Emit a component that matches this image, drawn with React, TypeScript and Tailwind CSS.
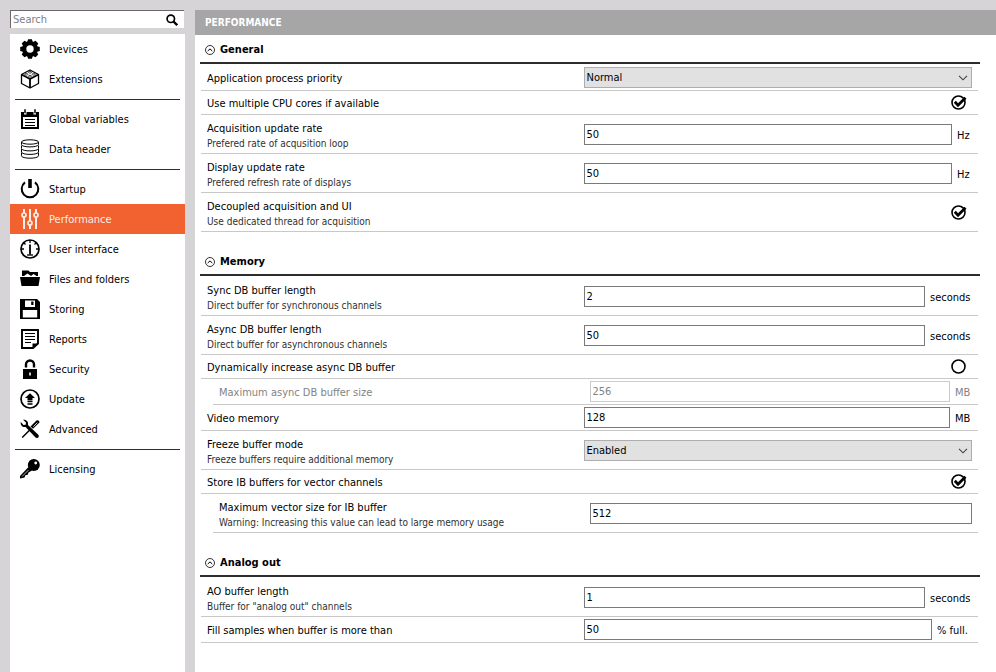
import { useId, useState } from "react";
import type { ReactNode } from "react";

const sidebarIcons: Record<string, ReactNode> = {
  Devices: (
    <>
      <g fill="currentColor">
        {[0, 45, 90, 135].map((angle) => (
          <path key={angle} d="M7.2 3 8.1 .2h3.800l.9 2.800v14l-.9 2.800H8.100l-.9-2.800z" transform={`rotate(${angle} 10 10)`} />
        ))}
        <circle cx="10" cy="10" r="7.800" />
      </g>
      <circle cx="10" cy="10" r="3.700" fill="#fff" />
    </>
  ),
  Extensions: (
    <g fill="none" stroke="currentColor" strokeWidth="1.400" strokeLinejoin="round">
      <path d="M1.500 5.500 10 1l8.500 4.500v9L10 19l-8.500-4.500z" strokeWidth="1.300" />
      <path d="M1.500 5.500 10 10l8.500-4.500M10 10v9" strokeWidth="1.800" />
      <g strokeWidth=".7">
        <ellipse cx="10" cy="3.300" rx="1.600" ry=".8" />
        <ellipse cx="6.300" cy="5.300" rx="1.600" ry=".8" />
        <ellipse cx="13.700" cy="5.300" rx="1.600" ry=".8" />
        <ellipse cx="10" cy="7.200" rx="1.600" ry=".8" />
      </g>
    </g>
  ),
  "Global variables": (
    <>
      <path d="M1 3h3v2.500h2.500V3h7v2.500H16V3h3v17H1zM3 8v10h14V8z" fill="currentColor" fillRule="evenodd" />
      <path d="M5 .3v4M15 .3v4" stroke="currentColor" strokeWidth="1.500" />
      <path d="M5 10.500h10M5 13.500h10M5 16.500h10" stroke="currentColor" strokeWidth="1.200" />
    </>
  ),
  "Data header": (
    <g fill="#fff" stroke="currentColor" strokeWidth="1">
      <path d="M1.500 14v2.800c0 3.200 17 3.200 17 0V14" />
      <path d="M1.500 10v3c0 3.200 17 3.200 17 0v-3" />
      <path d="M1.500 6.500v3c0 3.200 17 3.200 17 0v-3" />
      <path d="M1.500 3v2.500c0 3.200 17 3.200 17 0V3" />
      <ellipse cx="10" cy="3" rx="8.500" ry="2.200" />
    </g>
  ),
  Startup: (
    <>
      <path d="M5 3.400a8.300 8.300 0 1 0 10 0" fill="none" stroke="currentColor" strokeWidth="2" />
      <path d="M8.200 0h3.600v9H8.200z" fill="currentColor" />
    </>
  ),
  Performance: (
    <g fill="none" stroke="currentColor" strokeWidth="2">
      <path d="M4 0v4M4 8v12M10 0v12M10 16v4M16 0v4M16 8v12" />
      <circle cx="4" cy="6" r="2" strokeWidth="1.700" />
      <circle cx="10" cy="14" r="2" strokeWidth="1.700" />
      <circle cx="16" cy="6" r="2" strokeWidth="1.700" />
    </g>
  ),
  "User interface": (
    <g fill="none" stroke="currentColor">
      <circle cx="10" cy="10" r="9" strokeWidth="1.700" />
      <path d="M10 1v3M3.600 3.600 5.500 5.500M16.400 3.600 14.500 5.500M1 10h3M16 10h3" strokeWidth="1.300" />
      <path d="M10 5.500v10" strokeWidth="1.800" />
      <path d="M7 16h6" strokeWidth="1.300" />
    </g>
  ),
  "Files and folders": (
    <g fill="currentColor">
      <path d="M2 1.500h6.500L10 3h8v4h-1.500l-3-2-2.500 2-3.500-2.500L4 7H2z" />
      <path d="M0 8h20l-1.500 9h-17z" />
    </g>
  ),
  Storing: (
    <path d="M0 0h17l3 3v17H0zM5 1.500V8h10V1.500zM2.800 11v7.500h14.400V11zM11.200 2.500h2.300V6h-2.300z" fill="currentColor" fillRule="evenodd" />
  ),
  Reports: (
    <>
      <path d="M2 1h16v13.500L13 19H2z" fill="none" stroke="currentColor" strokeWidth="1.900" />
      <path d="M12.500 19v-4.500H18z" fill="currentColor" />
      <path d="M5 4.500h10M5 7.500h10M5 10.500h10M5 13.500h6" stroke="currentColor" strokeWidth="1.200" />
    </>
  ),
  Security: (
    <>
      <path d="M6 8.500V5.500a4 4 0 0 1 8 0v3" fill="none" stroke="currentColor" strokeWidth="2.400" />
      <path d="M3 10h14v10H3zM9.200 13.500v3h1.600v-3z" fill="currentColor" fillRule="evenodd" />
    </>
  ),
  Update: (
    <>
      <circle cx="10" cy="10" r="9" fill="none" stroke="currentColor" strokeWidth="1.700" />
      <path d="M10 4.300 15 9H12.500v2.500h-5V9H5z" fill="currentColor" />
      <path d="M7.500 12.700h5M7.500 15h5" stroke="currentColor" strokeWidth="1.300" />
    </>
  ),
  Advanced: (
    <>
      <path d="m2.200 18.500 8-8" stroke="currentColor" strokeWidth="1.500" />
      <path d="m10.500 7.500 6-6c1.500-1.200 3.700.8 2.700 2.300l-6.200 6z" fill="currentColor" />
      <path d="m13.300 7.700 4-4" stroke="#fff" strokeWidth=".8" />
      <path d="M3 .8 6 3.500 5.700 5.700 3.500 6 .8 3C0 5.800 2.500 8.700 5.600 8L15.500 18.500c2 1.500 4.300-.8 2.800-2.800L8 6C8.700 2.600 6 0 3 .8z" fill="currentColor" />
    </>
  ),
  Licensing: (
    <>
      <circle cx="13.800" cy="6" r="6" fill="currentColor" />
      <path d="M8.500 8 12 11.500 8.500 13.500 7.500 16H5.500L4.500 18.500 0 19.500V17z" fill="currentColor" />
      <circle cx="15.700" cy="4" r="1.400" fill="#fff" />
      <path d="m2 17.500 6.500-6.500" stroke="#fff" strokeWidth=".7" />
    </>
  ),
};

const sidebarGroups = [
  ["Devices", "Extensions"],
  ["Global variables", "Data header"],
  ["Startup", "Performance", "User interface", "Files and folders", "Storing", "Reports", "Security", "Update", "Advanced"],
  ["Licensing"],
];

function Sidebar() {
  const [active, setActive] = useState("Performance");
  return (
    <aside className="flex w-[175px] shrink-0 flex-col gap-1.5">
      <div className="mr-px flex h-[18px] items-center border-t border-l border-[#696969] bg-white pr-1">
        <input
          type="search"
          aria-label="Search"
          placeholder="Search"
          className="min-w-0 flex-1 bg-transparent pl-0.5 leading-4 outline-none placeholder:text-[#808080]"
        />
        <button type="button" aria-label="Start search">
          <svg viewBox="0 0 12 12" className="size-4 p-0.5" fill="none" stroke="currentColor">
            <circle cx="4.800" cy="4.800" r="3.700" strokeWidth="1.700" />
            <path d="m7.500 7.500 3.700 3.700" strokeWidth="2.300" />
          </svg>
        </button>
      </div>
      <nav aria-label="Settings" className="flex-1 bg-white">
        {sidebarGroups.map((group, index) => (
          <ul key={group[0]}>
            {index > 0 && <li aria-hidden="true" className="mx-[5px] mt-[5px] mb-1 h-px bg-[#2d2d2d]" />}
            {group.map((name) => (
              <li key={name}>
                <button
                  type="button"
                  aria-current={name === active ? "page" : undefined}
                  onClick={() => setActive(name)}
                  className={
                    name === active
                      ? "flex h-[30px] w-full items-center gap-[9px] bg-[#f26130] pl-2.5 text-left text-[#fbeee8]"
                      : "flex h-[30px] w-full items-center gap-[9px] pl-2.5 text-left"
                  }
                >
                  <svg viewBox="0 0 20 20" className="size-5 shrink-0" aria-hidden="true">
                    {sidebarIcons[name]}
                  </svg>
                  <span className="pt-0.5">{name}</span>
                </button>
              </li>
            ))}
          </ul>
        ))}
      </nav>
    </aside>
  );
}

function Section({ title, children }: { title: string; children: ReactNode }) {
  const [open, setOpen] = useState(true);
  return (
    <section>
      <h2 className="border-b-2 border-[#2d2d2d] font-bold">
        <button type="button" aria-expanded={open} onClick={() => setOpen(!open)} className="flex h-[27px] w-full items-center gap-[5px] pt-[3px] pl-[5px] text-left">
          <svg viewBox="0 0 10 10" className="size-2.5" fill="none" stroke="currentColor" aria-hidden="true">
            <circle cx="5" cy="5" r="4.500" strokeWidth=".8" />
            <path d="M2.700 6 5 3.900 7.300 6" strokeWidth="1" />
          </svg>
          {title}
        </button>
      </h2>
      {open && <div className="mt-px mr-0.5 ml-px">{children}</div>}
    </section>
  );
}

type RowProps = {
  label: string;
  note?: string;
  size?: "check" | "field" | "tall";
  indent?: boolean;
  disabled?: boolean;
  children: (id: string) => ReactNode;
};

const rowHeights = { check: "h-6", field: "h-[26px]", tall: "h-[39px] pt-px" };

function Row({ label, note, size = "tall", indent, disabled, children }: RowProps) {
  const id = useId();
  return (
    <div
      className={`flex items-center border-b border-[#c8c8c8] ${rowHeights[size]} ${indent ? "ml-3" : ""} ${disabled ? "text-[#838383]" : ""}`}
    >
      <div className="min-w-0 flex-1 pt-[3px] pl-1.5">
        <label htmlFor={id} className="block leading-4">
          {label}
        </label>
        {note && <p className="text-[10px] leading-[14px] text-[#303030]">{note}</p>}
      </div>
      <div className="mr-1.5 flex w-1/2 items-center">{children(id)}</div>
    </div>
  );
}

function Field({ id, value, unit, unitWidth, disabled }: { id: string; value: string; unit?: string; unitWidth?: string; disabled?: boolean }) {
  return (
    <>
      <input
        id={id}
        type="text"
        defaultValue={value}
        disabled={disabled}
        className="h-[21px] min-w-0 flex-1 border border-[#7a7a7a] bg-white px-0.5 outline-none focus:border-[#0078d7] disabled:border-[#cccccc]"
      />
      {unit && <span className={`shrink-0 pt-0.5 pl-[5px] whitespace-nowrap ${unitWidth}`}>{unit}</span>}
    </>
  );
}

function Choice({ id, options }: { id: string; options: string[] }) {
  return (
    <div className="grid flex-1 items-center">
      <select id={id} className="col-start-1 row-start-1 h-[21px] appearance-none border border-[#adadad] bg-[#e1e1e1] px-0.5 outline-none">
        {options.map((option) => (
          <option key={option}>{option}</option>
        ))}
      </select>
      <svg viewBox="0 0 10 6" className="pointer-events-none col-start-1 row-start-1 mr-1 h-1.5 w-2.5 justify-self-end" fill="none" stroke="#404040" aria-hidden="true">
        <path d="m1 .8 4 4 4-4" strokeWidth="1.100" />
      </svg>
    </div>
  );
}

function Check({ id, checked }: { id: string; checked?: boolean }) {
  return (
    <span className="mr-[5px] ml-auto grid size-4">
      <input id={id} type="checkbox" defaultChecked={checked} className="peer col-start-1 row-start-1 size-4 appearance-none" />
      <svg viewBox="0 0 16 16" className="pointer-events-none col-start-1 row-start-1 size-4" fill="none" stroke="currentColor" aria-hidden="true">
        <circle cx="7.500" cy="7.500" r="6.500" strokeWidth="1.600" />
      </svg>
      <svg viewBox="0 0 16 16" className="pointer-events-none invisible col-start-1 row-start-1 size-4 peer-checked:visible" fill="none" stroke="currentColor" aria-hidden="true">
        <path d="m3.800 6.800 3.200 3.400 7.500-7.500" strokeWidth="2.800" />
      </svg>
    </span>
  );
}

export default function App() {
  return (
    <div className="flex min-h-screen gap-2.5 bg-[#d6d4d7] pt-2.5 pl-2.5 font-['DejaVu_Sans_Condensed','DejaVu_Sans',sans-serif] text-[11px] leading-4 text-black">
      <Sidebar />
      <main className="min-w-0 flex-1 bg-white">
        <h1 className="flex h-[25px] items-center bg-[#a6a6a6] pl-2.5 text-[10px] font-bold text-white">PERFORMANCE</h1>
        <div className="flex flex-col gap-[15px] pr-4 pl-[5px]">
          <Section title="General">
            <Row label="Application process priority" size="field">
              {(id) => <Choice id={id} options={["Normal", "High", "Realtime"]} />}
            </Row>
            <Row label="Use multiple CPU cores if available" size="check">
              {(id) => <Check id={id} checked />}
            </Row>
            <Row label="Acquisition update rate" note="Prefered rate of acqusition loop">
              {(id) => <Field id={id} value="50" unit="Hz" unitWidth="w-5" />}
            </Row>
            <Row label="Display update rate" note="Prefered refresh rate of displays">
              {(id) => <Field id={id} value="50" unit="Hz" unitWidth="w-5" />}
            </Row>
            <Row label="Decoupled acquisition and UI" note="Use dedicated thread for acquisition">
              {(id) => <Check id={id} checked />}
            </Row>
          </Section>
          <Section title="Memory">
            <Row label="Sync DB buffer length" note="Direct buffer for synchronous channels">
              {(id) => <Field id={id} value="2" unit="seconds" unitWidth="w-[47px]" />}
            </Row>
            <Row label="Async DB buffer length" note="Direct buffer for asynchronous channels">
              {(id) => <Field id={id} value="50" unit="seconds" unitWidth="w-[47px]" />}
            </Row>
            <Row label="Dynamically increase async DB buffer" size="check">
              {(id) => <Check id={id} />}
            </Row>
            <Row label="Maximum async DB buffer size" size="field" indent disabled>
              {(id) => <Field id={id} value="256" unit="MB" unitWidth="w-[22px]" disabled />}
            </Row>
            <Row label="Video memory" size="field">
              {(id) => <Field id={id} value="128" unit="MB" unitWidth="w-[22px]" />}
            </Row>
            <Row label="Freeze buffer mode" note="Freeze buffers require additional memory">
              {(id) => <Choice id={id} options={["Enabled", "Disabled"]} />}
            </Row>
            <Row label="Store IB buffers for vector channels" size="check">
              {(id) => <Check id={id} checked />}
            </Row>
            <Row label="Maximum vector size for IB buffer" note="Warning: Increasing this value can lead to large memory usage" indent>
              {(id) => <Field id={id} value="512" />}
            </Row>
          </Section>
          <Section title="Analog out">
            <Row label="AO buffer length" note={'Buffer for "analog out" channels'}>
              {(id) => <Field id={id} value="1" unit="seconds" unitWidth="w-[47px]" />}
            </Row>
            <Row label="Fill samples when buffer is more than" size="field">
              {(id) => <Field id={id} value="50" unit="% full." unitWidth="w-10" />}
            </Row>
          </Section>
        </div>
      </main>
    </div>
  );
}
